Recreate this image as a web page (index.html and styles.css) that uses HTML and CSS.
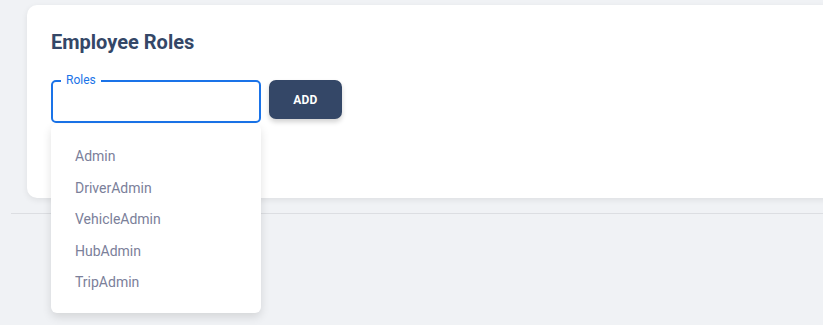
FILE: index.html
```html
<!DOCTYPE html>
<html>
<head>
<meta charset="utf-8">
<link rel="stylesheet" href="styles.css">
</head>
<body>
<div class="page">
  <div class="card">
    <h2 class="title">Employee Roles</h2>
    <div class="row">
      <div class="field">
        <span class="label">Roles</span>
        <ul class="menu">
          <li>Admin</li>
          <li>DriverAdmin</li>
          <li>VehicleAdmin</li>
          <li>HubAdmin</li>
          <li>TripAdmin</li>
        </ul>
      </div>
      <button class="btn">ADD</button>
    </div>
  </div>
  <div class="divider"></div>
</div>
</body>
</html>
```
FILE: styles.css
```css
html, body {
  margin: 0;
  padding: 0;
  background: #f0f2f5;
  overflow: hidden;
  font-family: Roboto, "Liberation Sans", sans-serif;
}
.page {
  padding-top: 5px;
  width: 823px;
  height: 325px;
}
.card {
  margin-left: 27px;
  width: 830px;
  height: 193px;
  box-sizing: border-box;
  background: #fff;
  border-radius: 10px;
  box-shadow: 0 2px 6px rgba(0,0,0,0.08);
  padding: 24px 24px 0;
}
.title {
  margin: 0;
  font-size: 20px;
  line-height: 27px;
  font-weight: 700;
  color: #344767;
}
.row {
  margin-top: 24px;
  display: flex;
  align-items: flex-start;
  gap: 8px;
}
.field {
  position: relative;
  width: 210px;
  height: 43px;
  box-sizing: border-box;
  border: 2px solid #1a73e8;
  border-radius: 5px;
}
.label {
  position: absolute;
  left: 8px;
  top: -9px;
  padding: 0 5px;
  background: #fff;
  font-size: 12px;
  line-height: 14px;
  color: #1a73e8;
}
.menu {
  position: absolute;
  left: -2px;
  top: 42px;
  width: 210px;
  margin: 0;
  padding: 17px 0 14px;
  list-style: none;
  background: #fff;
  border-radius: 6px;
  box-shadow: 0 4px 10px rgba(0,0,0,0.12);
  z-index: 5;
}
.menu li {
  padding: 6px 24px;
  font-size: 14px;
  line-height: 19.5px;
  color: #7b809a;
}
.btn {
  width: 73px;
  height: 39px;
  border: 0;
  border-radius: 7px;
  background: #344767;
  color: #fff;
  font-family: Roboto, "Liberation Sans", sans-serif;
  font-size: 12px;
  font-weight: 700;
  letter-spacing: 0.2px;
  box-shadow: 0 3px 5px rgba(0,0,0,0.18);
}
.divider {
  margin: 15px 0 0 11px;
  height: 1px;
  background: #dcdee2;
}
```
